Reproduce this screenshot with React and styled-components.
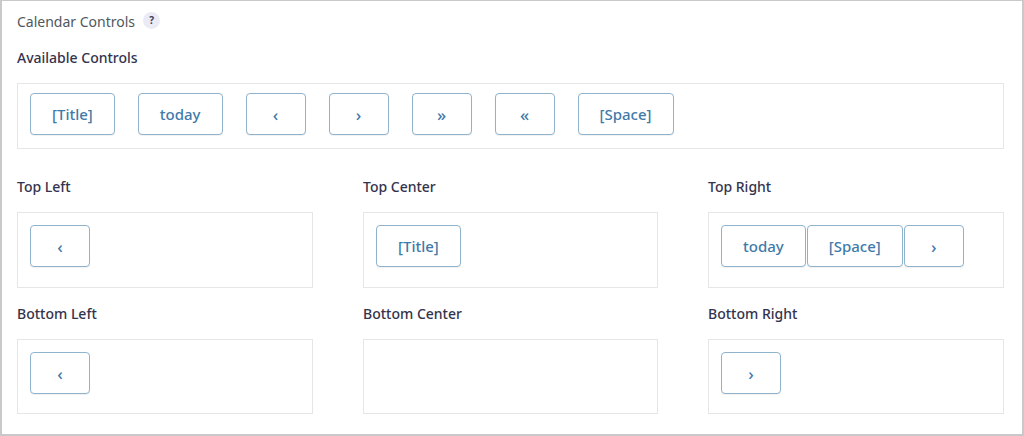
import React from 'react';
import styled, { createGlobalStyle } from 'styled-components';

const GlobalStyle = createGlobalStyle`
  html, body {
    margin: 0;
    padding: 0;
    background: #fff;
  }
  body {
    font-family: "Noto Sans", "Open Sans", sans-serif;
  }
`;

const Frame = styled.div`
  box-sizing: border-box;
  width: 1024px;
  height: 436px;
  border: 2px solid #c9c9c9;
  border-top-width: 1px;
  padding: 10px 18px 0 15px;
  overflow: hidden;
`;

const Heading = styled.div`
  display: flex;
  align-items: center;
  gap: 8px;
  height: 20px;
  font-size: 14px;
  color: #50575e;
  margin-bottom: 17px;
`;

const HelpBadge = styled.span`
  display: inline-flex;
  align-items: center;
  justify-content: center;
  width: 17px;
  height: 17px;
  border-radius: 50%;
  background: #ebebf6;
  color: #3c3c5c;
  font-size: 10px;
  font-weight: 700;
  margin-top: -2px;
`;

const Label = styled.div`
  height: 20px;
  line-height: 20px;
  font-size: 14px;
  font-weight: 500;
  color: #33334d;
  margin-bottom: 15px;
`;

const Tray = styled.div`
  box-sizing: border-box;
  display: flex;
  align-items: flex-start;
  gap: ${(p) => p.$gap}px;
  height: ${(p) => p.$height}px;
  padding: ${(p) => p.$pad};
  border: 1px solid #e6e6e6;
  background: #fff;
`;

const Grid = styled.div`
  display: grid;
  grid-template-columns: 296px 295px 296px;
  column-gap: 50px;
  row-gap: 16px;
  margin-top: 28px;
`;

const Slot = styled.div`
  display: flex;
  flex-direction: column;
`;

const Control = styled.button`
  box-sizing: border-box;
  height: 42px;
  min-width: 60px;
  padding: 0 ${(p) => (p.$wide ? 21 : 0)}px;
  border: 1px solid #8fb3cd;
  border-radius: 4px;
  background: #fff;
  box-shadow: 0 1px 1px rgba(0, 0, 0, 0.06);
  color: #3f7aa9;
  font-family: "Noto Sans", "Open Sans", sans-serif;
  font-size: ${(p) => (p.$wide ? 15 : 17)}px;
  font-weight: 500;
  cursor: pointer;
`;

const available = ['[Title]', 'today', '‹', '›', '»', '«', '[Space]'];

const zones = [
  { name: 'Top Left', items: ['‹'], height: 76 },
  { name: 'Top Center', items: ['[Title]'], height: 76 },
  { name: 'Top Right', items: ['today', '[Space]', '›'], height: 76 },
  { name: 'Bottom Left', items: ['‹'], height: 75 },
  { name: 'Bottom Center', items: [], height: 75 },
  { name: 'Bottom Right', items: ['›'], height: 75 },
];

const isWide = (item) => item.length > 1;

const App = () => {
  return (
    <>
      <GlobalStyle />
      <Frame>
        <Heading>
          Calendar Controls <HelpBadge>?</HelpBadge>
        </Heading>
        <Label>Available Controls</Label>
        <Tray $gap={23} $height={66} $pad="9px 12px">
          {available.map((item) => (
            <Control key={item} $wide={isWide(item)}>
              {item}
            </Control>
          ))}
        </Tray>
        <Grid>
          {zones.map((zone) => (
            <Slot key={zone.name}>
              <Label>{zone.name}</Label>
              <Tray $gap={1} $height={zone.height} $pad="12px">
                {zone.items.map((item) => (
                  <Control key={item} $wide={isWide(item)}>
                    {item}
                  </Control>
                ))}
              </Tray>
            </Slot>
          ))}
        </Grid>
      </Frame>
    </>
  );
};

export default App;
